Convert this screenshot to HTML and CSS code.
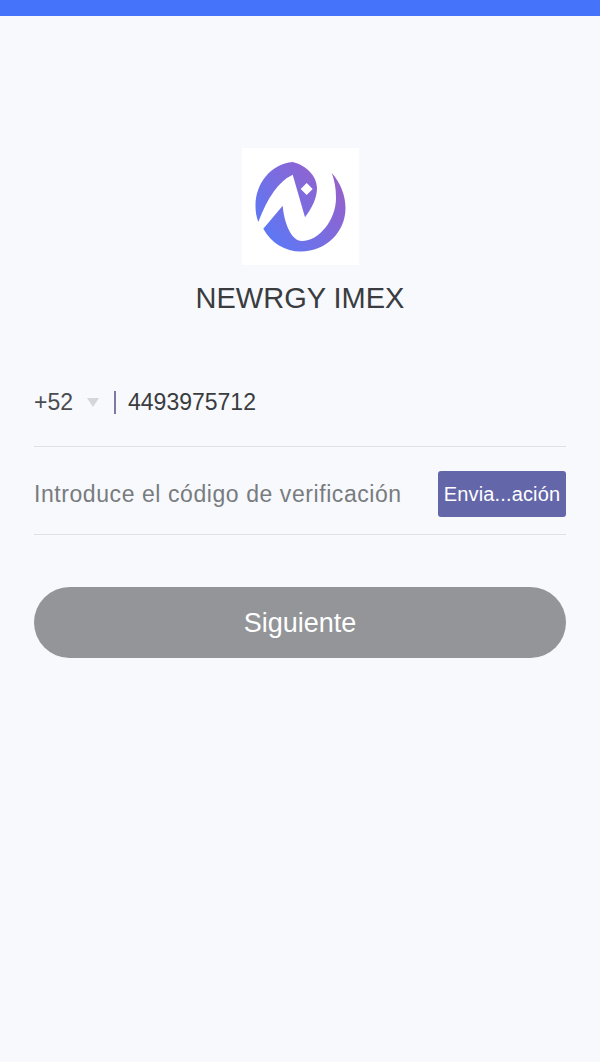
FILE: index.html

```html
<!DOCTYPE html>
<html lang="es">
<head>
    <meta charset="UTF-8">
    <meta name="viewport" content="width=device-width, initial-scale=1.0">
    <title>NEWRGY IMEX</title>
    <link rel="stylesheet" href="styles.css">
</head>
<body>
    <div class="top-bar"></div>

    <div class="brand">
        <div class="logo-box">
            <svg class="logo" viewBox="254 161 91 91" width="91" height="91">
                <defs>
                    <linearGradient id="logo-grad" gradientUnits="userSpaceOnUse" x1="262" y1="240" x2="340" y2="175">
                        <stop offset="0" stop-color="#5a79f7"/>
                        <stop offset="1" stop-color="#9a5fc8"/>
                    </linearGradient>
                </defs>
                <path fill="url(#logo-grad)" d="M291.7 162C270 164 254.5 183 254.5 206C254.5 212 255.5 217 257.3 222Q271.5 184 291.7 174.7L304 217.3C311 208 316 198 316 188C316 176 305 165 291.7 162Z"/>
                <path fill="url(#logo-grad)" d="M262.3 228.7L281.7 205.7C283 222 290 241 301 241C318 241 335 220 335 198C335 188 333.5 180 330.7 173C339 182 344.5 195 344.5 208C344.5 232 325 251.5 300 251.5C284 251.5 270 243 262.3 228.7Z"/>
                <path fill="#fff" d="M305.7 183L311.7 189L305.7 195L299.7 189Z"/>
            </svg>
        </div>
        <h1 class="brand-name">NEWRGY IMEX</h1>
    </div>

    <div class="form">
        <div class="row row-phone">
            <span class="prefix">+52</span>
            <span class="caret"></span>
            <span class="divider"></span>
            <span class="phone">4493975712</span>
        </div>
        <div class="row row-code">
            <span class="placeholder">Introduce el código de verificación</span>
            <button class="send-btn">Envia...ación</button>
        </div>
        <button class="next-btn">Siguiente</button>
    </div>
</body>
</html>
```

FILE: styles.css

```css
body {
    font-family: 'Liberation Sans', Arial, sans-serif;
    margin: 0;
    background-color: #f7f9fd;
    min-height: 1062px;
}
.top-bar {
    height: 16px;
    background-color: #4574fb;
}
.brand {
    display: flex;
    flex-direction: column;
    align-items: center;
    padding-top: 132px;
}
.logo-box {
    width: 117px;
    height: 117px;
    background: white;
    display: flex;
    align-items: center;
    justify-content: center;
}
.logo {
    display: block;
}
.brand-name {
    margin: 17px 0 0;
    font-size: 29px;
    line-height: 33px;
    font-weight: 400;
    color: #3a3c40;
}
.form {
    padding: 0 34px;
    margin-top: 51px;
}
.row {
    display: flex;
    align-items: center;
    border-bottom: 1px solid #dfe1e4;
}
.row-phone {
    box-sizing: border-box;
    height: 81px;
    padding-bottom: 8px;
}
.prefix {
    font-size: 23px;
    color: #4a4c50;
}
.caret {
    width: 0;
    height: 0;
    margin-left: 14px;
    border-left: 6px solid transparent;
    border-right: 6px solid transparent;
    border-top: 9px solid #d4d6da;
}
.divider {
    width: 2px;
    height: 23px;
    margin-left: 15px;
    background-color: #7b7a9f;
}
.phone {
    margin-left: 12px;
    font-size: 23px;
    color: #3a3c40;
}
.row-code {
    height: 88px;
    justify-content: space-between;
    align-items: flex-end;
    padding-bottom: 17px;
    box-sizing: border-box;
}
.placeholder {
    font-size: 23px;
    line-height: 46px;
    letter-spacing: 0.57px;
    color: #787c7f;
}
.send-btn {
    width: 128px;
    height: 46px;
    padding: 0;
    border: none;
    border-radius: 3px;
    background-color: #6366a8;
    color: white;
    font-family: inherit;
    font-size: 20px;
    letter-spacing: 0.15px;
}
.next-btn {
    display: block;
    width: 100%;
    height: 71px;
    margin-top: 52px;
    padding: 2px 0 0;
    border: none;
    border-radius: 36px;
    background-color: #939598;
    color: white;
    font-family: inherit;
    font-size: 27px;
}
```
